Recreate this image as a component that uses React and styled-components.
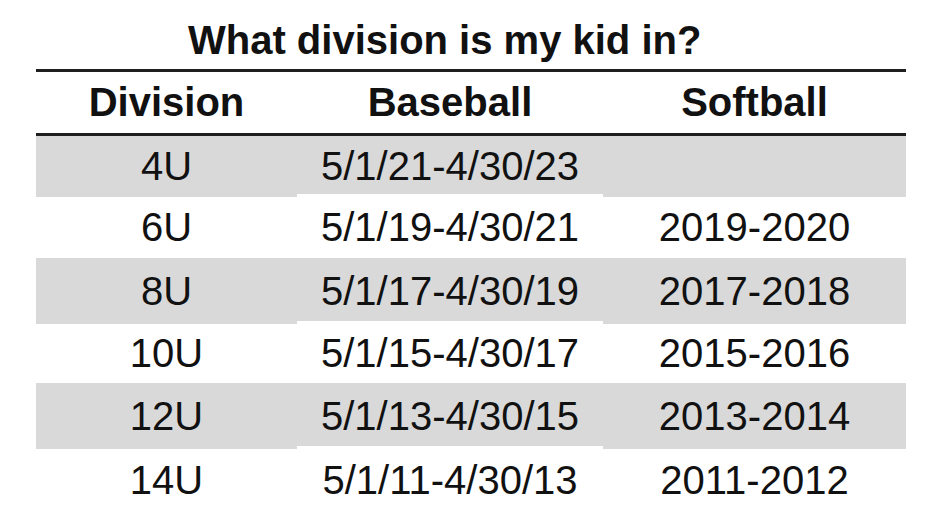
import styled, { createGlobalStyle } from 'styled-components';

const GlobalStyle = createGlobalStyle`
  html, body {
    margin: 0;
    padding: 0;
    background: #fff;
  }
  body {
    font-family: "Liberation Sans", Arial, sans-serif;
    color: #111;
  }
`;

const Page = styled.div`
  width: 940px;
  height: 516px;
  overflow: hidden;
  padding-left: 36px;
  box-sizing: border-box;
`;

const Sheet = styled.div`
  width: 870px;
`;

const Title = styled.h1`
  margin: 0;
  height: 69px;
  padding: 20px 0 0 152px;
  box-sizing: border-box;
  font-size: 40px;
  line-height: 40px;
  font-weight: 700;
  white-space: nowrap;
`;

const Rule = styled.div`
  height: 3px;
  background: #1f1f1f;
`;

const Row = styled.div`
  display: grid;
  grid-template-columns: 261px 306px 303px;
  height: ${(p) => p.$h}px;
`;

const Cell = styled.div`
  display: flex;
  align-items: center;
  justify-content: center;
  font-size: 40px;
  font-weight: ${(p) => (p.$head ? 700 : 400)};
  white-space: nowrap;
  background: ${(p) => (p.$shaded ? '#d9d9d9' : 'transparent')};
  box-shadow: ${(p) => (p.$shaded && p.$notch ? 'inset 0 -3px 0 #fff' : 'none')};
`;

const rows = [
  { div: '4U', base: '5/1/21-4/30/23', soft: '', h: 61 },
  { div: '6U', base: '5/1/19-4/30/21', soft: '2019-2020', h: 61 },
  { div: '8U', base: '5/1/17-4/30/19', soft: '2017-2018', h: 66 },
  { div: '10U', base: '5/1/15-4/30/17', soft: '2015-2016', h: 59 },
  { div: '12U', base: '5/1/13-4/30/15', soft: '2013-2014', h: 66 },
  { div: '14U', base: '5/1/11-4/30/13', soft: '2011-2012', h: 62 },
];

export default function App() {
  return (
    <>
      <GlobalStyle />
      <Page>
        <Sheet>
          <Title>What division is my kid in?</Title>
          <Rule />
          <Row $h={61}>
            <Cell $head>Division</Cell>
            <Cell $head>Baseball</Cell>
            <Cell $head>Softball</Cell>
          </Row>
          <Rule />
          {rows.map((r, i) => {
            const shaded = i % 2 === 0;
            return (
              <Row key={r.div} $h={r.h}>
                <Cell $shaded={shaded}>{r.div}</Cell>
                <Cell $shaded={shaded} $notch>
                  {r.base}
                </Cell>
                <Cell $shaded={shaded}>{r.soft}</Cell>
              </Row>
            );
          })}
        </Sheet>
      </Page>
    </>
  );
}
